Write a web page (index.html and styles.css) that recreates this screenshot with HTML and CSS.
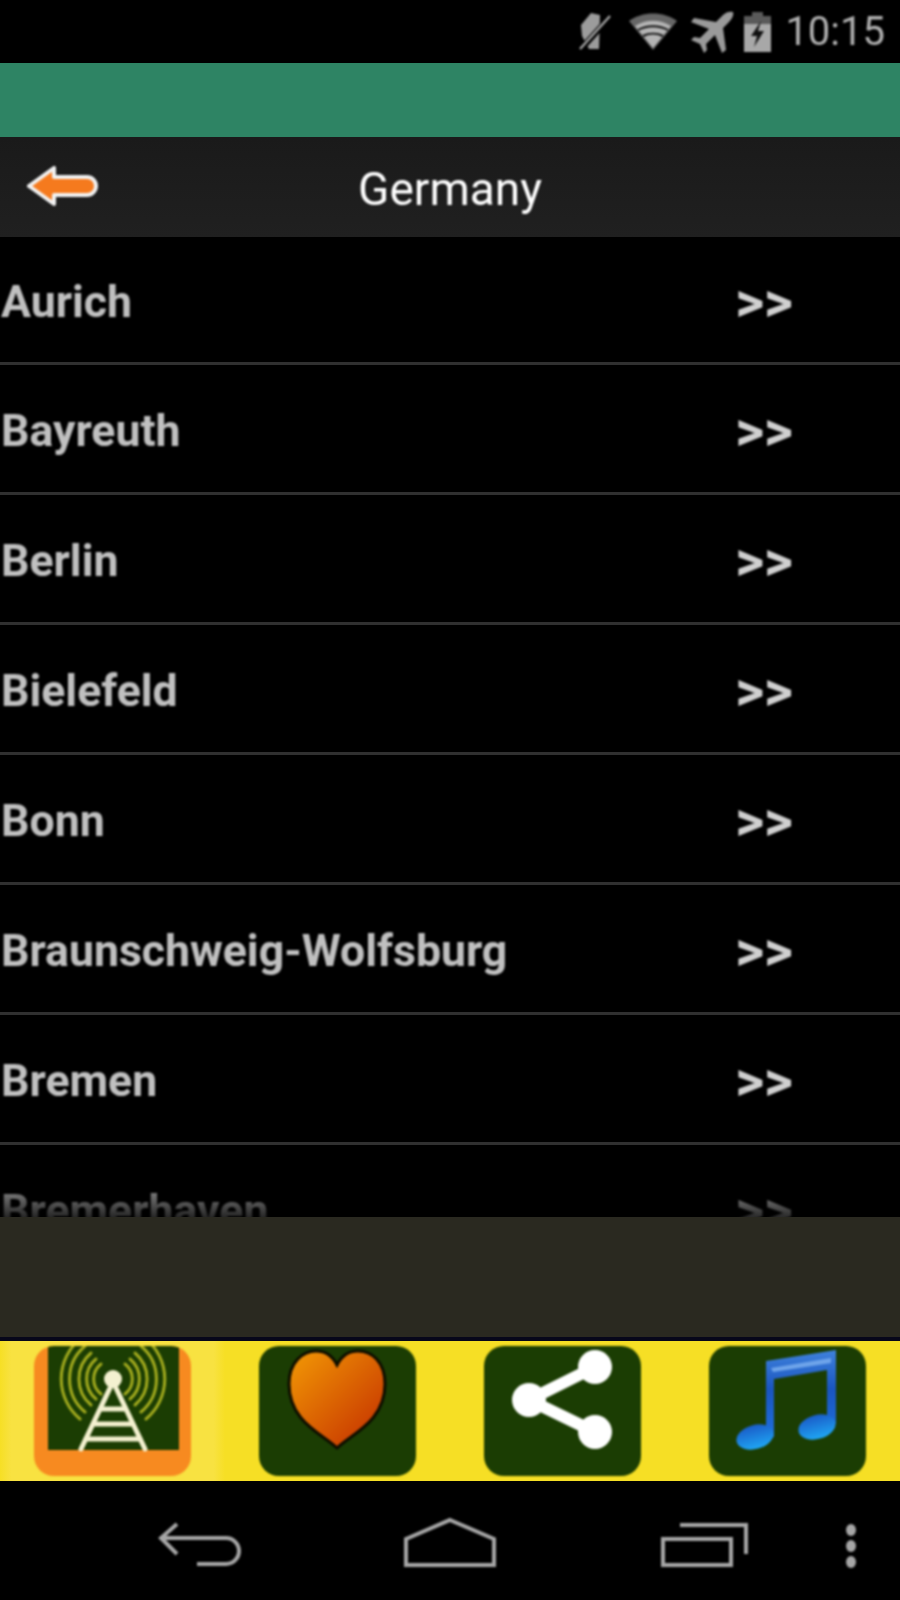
FILE: index.html
```html
<!DOCTYPE html>
<html lang="en">

<head>
    <meta charset="UTF-8">
    <meta name="viewport" content="width=device-width, initial-scale=1.0">
    <title>Germany</title>
    <link rel="stylesheet" href="styles.css">
</head>

<body>
    <div class="screen">
        <div class="status-bar">
            <svg class="status-icon" width="34" height="40" viewBox="0 0 34 40">
                <path d="M13 1l9 2-1 34H11L4 24 3 13z" fill="#9c9c9c"/>
                <path d="M3 37L33 4" stroke="#000" stroke-width="6"/>
                <path d="M2 37L32 4" stroke="#a2a2a2" stroke-width="2.5"/>
            </svg>
            <svg class="status-icon wifi" width="50" height="38" viewBox="0 0 50 38">
                <path d="M1 8C14-2 36-2 49 8L25 37z" fill="#666"/>
                <path d="M7 13c11-7 25-7 36 0L25 35z" fill="#b4b4b4"/>
                <path d="M10 17c9-5 21-5 30 0" stroke="#111" stroke-width="2" fill="none"/>
                <path d="M15 23c6-3 14-3 20 0" stroke="#111" stroke-width="2" fill="none"/>
            </svg>
            <svg class="status-icon plane" width="44" height="42" viewBox="0 0 44 42">
                <path d="M43 1c1 3-1 7-4 10l-6 6 3 22-4 3-7-18-9 9 1 6-3 3-4-9-9-4 3-3 6 1 9-9L1 11l3-4 22 4 7-7c3-3 7-4 10-3z" fill="#9a9a9a"/>
            </svg>
            <svg class="status-icon" width="27" height="40" viewBox="0 0 27 40">
                <path d="M8 0h11v4h8v36H0V4h8z" fill="#a8a8a8"/>
                <path d="M8 0h11v4h8v8H0V4h8z" fill="#5a5a5a"/>
                <path d="M17 9L7 24h6l-3 11 10-16h-6z" fill="#111"/>
            </svg>
            <span class="clock">10:15</span>
        </div>

        <div class="green-bar"></div>

        <div class="title-bar">
            <svg class="back-arrow" width="72" height="42" viewBox="0 0 72 42">
                <path d="M3 21L28 3v9h33a9 9 0 0 1 0 18H28v9z" fill="#f57a1e" stroke="#f2f2f2" stroke-width="4" stroke-linejoin="round"/>
            </svg>
            <div class="title">Germany</div>
        </div>

        <div class="list">
            <div class="row"><span>Aurich</span><span class="more">&gt;&gt;</span></div>
            <div class="row"><span>Bayreuth</span><span class="more">&gt;&gt;</span></div>
            <div class="row"><span>Berlin</span><span class="more">&gt;&gt;</span></div>
            <div class="row"><span>Bielefeld</span><span class="more">&gt;&gt;</span></div>
            <div class="row"><span>Bonn</span><span class="more">&gt;&gt;</span></div>
            <div class="row"><span>Braunschweig-Wolfsburg</span><span class="more">&gt;&gt;</span></div>
            <div class="row"><span>Bremen</span><span class="more">&gt;&gt;</span></div>
            <div class="row"><span>Bremerhaven</span><span class="more">&gt;&gt;</span></div>
            <div class="list-fade"></div>
        </div>

        <div class="ad-space"></div>

        <div class="tabs">
            <div class="tab selected">
                <div class="tile">
                    <svg width="157" height="130" viewBox="0 0 157 130">
                        <rect x="14" y="0" width="131" height="104" fill="#1b3d03"/>
                        <g fill="none" stroke="#a3ab1e" stroke-width="3" stroke-linecap="round">
                            <path d="M67 18A19 19 0 0 0 67 48M91 18A19 19 0 0 1 91 48"/>
                            <path d="M62 13A26 26 0 0 0 62 53M96 13A26 26 0 0 1 96 53"/>
                            <path d="M57 7A34 34 0 0 0 57 59M101 7A34 34 0 0 1 101 59"/>
                            <path d="M51 0A43 43 0 0 0 51 66M107 0A43 43 0 0 1 107 66"/>
                            <path d="M46 -7A52 52 0 0 0 46 73M112 -7A52 52 0 0 1 112 73"/>
                        </g>
                        <g fill="none" stroke="#f4f1d0" stroke-width="5" stroke-linecap="round">
                            <path d="M76 42L47 103M82 42l29 61"/>
                            <path d="M68 63h22M61 78h36M52 93h54"/>
                        </g>
                        <circle cx="79" cy="33" r="9" fill="#f4f1d0"/>
                    </svg>
                </div>
            </div>
            <div class="tab">
                <div class="tile">
                    <svg width="157" height="130" viewBox="0 0 157 130">
                        <defs>
                            <linearGradient id="heartFill" x1="0" y1="0" x2="1" y2="1">
                                <stop offset="0" stop-color="#f39a05"/>
                                <stop offset="1" stop-color="#c22a00"/>
                            </linearGradient>
                        </defs>
                        <path d="M78 102C64 88 30 76 30 38 30 16 44 5 57 5c10 0 17 6 21 14 4-8 11-14 21-14 14 0 27 11 27 33 0 38-34 50-48 64z" fill="url(#heartFill)" stroke="#0d0d00" stroke-width="3"/>
                    </svg>
                </div>
            </div>
            <div class="tab">
                <div class="tile">
                    <svg width="157" height="130" viewBox="0 0 157 130">
                        <path d="M111 21L45 54l66 32" fill="none" stroke="#fff" stroke-width="12"/>
                        <circle cx="111" cy="21" r="17" fill="#fff"/>
                        <circle cx="45" cy="54" r="17" fill="#fff"/>
                        <circle cx="111" cy="86" r="17" fill="#fff"/>
                    </svg>
                </div>
            </div>
            <div class="tab">
                <div class="tile">
                    <svg width="157" height="130" viewBox="0 0 157 130">
                        <defs>
                            <linearGradient id="noteFill" x1="0" y1="0" x2="0" y2="1">
                                <stop offset="0" stop-color="#3f82dc"/>
                                <stop offset="0.45" stop-color="#1a55c0"/>
                                <stop offset="1" stop-color="#1f6fdc"/>
                            </linearGradient>
                            <linearGradient id="headFill" x1="0" y1="0" x2="0" y2="1">
                                <stop offset="0" stop-color="#1a5cc8"/>
                                <stop offset="1" stop-color="#1fa6f4"/>
                            </linearGradient>
                        </defs>
                        <path d="M57 15L127 4v74h-9V24L65 33v58h-8z" fill="url(#noteFill)"/>
                        <path d="M62 22l60-10v5l-58 9z" fill="#6ea4ea"/>
                        <ellipse cx="46" cy="91" rx="19" ry="12" transform="rotate(-15 46 91)" fill="url(#headFill)"/>
                        <ellipse cx="108" cy="81" rx="19" ry="12" transform="rotate(-15 108 81)" fill="url(#headFill)"/>
                    </svg>
                </div>
            </div>
        </div>

        <div class="nav-bar">
            <svg width="900" height="118" viewBox="0 0 900 118">
                <g fill="none" stroke="#a6a6a6" stroke-width="4">
                    <path d="M177 41L161 55l16 16"/>
                    <path d="M161 55h65a13 13 0 0 1 0 26h-29"/>
                    <path d="M450 37l44 19v26h-88V56z"/>
                    <rect x="663" y="56" width="68" height="26"/>
                    <path d="M680 42h66v29"/>
                </g>
                <ellipse cx="851" cy="47" rx="5" ry="6" fill="#a6a6a6"/>
                <ellipse cx="851" cy="63" rx="5" ry="6" fill="#a6a6a6"/>
                <ellipse cx="851" cy="79" rx="5" ry="6" fill="#a6a6a6"/>
            </svg>
        </div>
    </div>
</body>

</html>
```
FILE: styles.css
```css
body {
    margin: 0;
    padding: 0;
    background-color: #000;
}

.screen {
    width: 900px;
    height: 1600px;
    display: flex;
    flex-direction: column;
    overflow: hidden;
    font-family: Roboto, "Liberation Sans", sans-serif;
}

/* the screenshot is upscaled, so text and icons are a bit soft */
.status-icon,
.clock,
.back-arrow,
.title,
.row span,
.tile,
.nav-bar svg {
    filter: blur(0.8px);
}

.status-bar {
    height: 63px;
    flex-shrink: 0;
    display: flex;
    align-items: center;
    justify-content: flex-end;
    gap: 12px;
    padding-right: 15px;
    box-sizing: border-box;
    background-color: #000;
}

.status-icon {
    display: block;
}

.wifi {
    margin-left: 4px;
}

.plane {
    margin-right: -2px;
}

.clock {
    font-size: 40px;
    color: #b0b0b0;
    margin-left: 2px;
}

.green-bar {
    height: 74px;
    flex-shrink: 0;
    background-color: #2e8464;
}

.title-bar {
    height: 100px;
    flex-shrink: 0;
    position: relative;
    display: flex;
    align-items: center;
    justify-content: center;
    padding-top: 3px;
    box-sizing: border-box;
    background: linear-gradient(#1a1a1a, #202020);
}

.back-arrow {
    position: absolute;
    left: 26px;
    top: 28px;
}

.title {
    font-size: 46px;
    color: #fff;
}

.list {
    height: 980px;
    flex-shrink: 0;
    position: relative;
    overflow: hidden;
    background-color: #000;
}

.row {
    height: 130px;
    box-sizing: border-box;
    display: flex;
    align-items: center;
    justify-content: space-between;
    padding: 4px 107px 0 1px;
    border-bottom: 3px solid #303030;
    font-size: 44.6px;
    font-weight: 700;
    color: #c0c0c0;
}

.row:first-child {
    height: 128px;
}

.row .more {
    font-size: 56px;
    color: #d0d0d0;
}

.list-fade {
    position: absolute;
    left: 0;
    right: 0;
    bottom: 0;
    height: 40px;
    background: linear-gradient(rgba(0, 0, 0, 0.1), rgba(0, 0, 0, 0.8));
}

.ad-space {
    height: 124px;
    flex-shrink: 0;
    box-sizing: border-box;
    background-color: #2a2920;
    border-bottom: 4px solid #07071a;
}

.tabs {
    height: 140px;
    flex-shrink: 0;
    display: grid;
    grid-template-columns: repeat(4, 1fr);
    background-color: #f6df25;
}

.tab {
    display: flex;
    justify-content: center;
    padding-top: 5px;
}

.tab.selected {
    background: linear-gradient(90deg, #f6df25, #f8e241 5%, #f8e241 95%, #f6df25);
}

.tile {
    width: 157px;
    height: 130px;
    border-radius: 20px;
    overflow: hidden;
    background-color: #1b3d03;
}

.tile svg {
    display: block;
}

.tab.selected .tile {
    background-color: #f78a20;
}

.nav-bar {
    flex: 1;
    padding-top: 2px;
    background-color: #000;
}

.nav-bar svg {
    display: block;
}
```
